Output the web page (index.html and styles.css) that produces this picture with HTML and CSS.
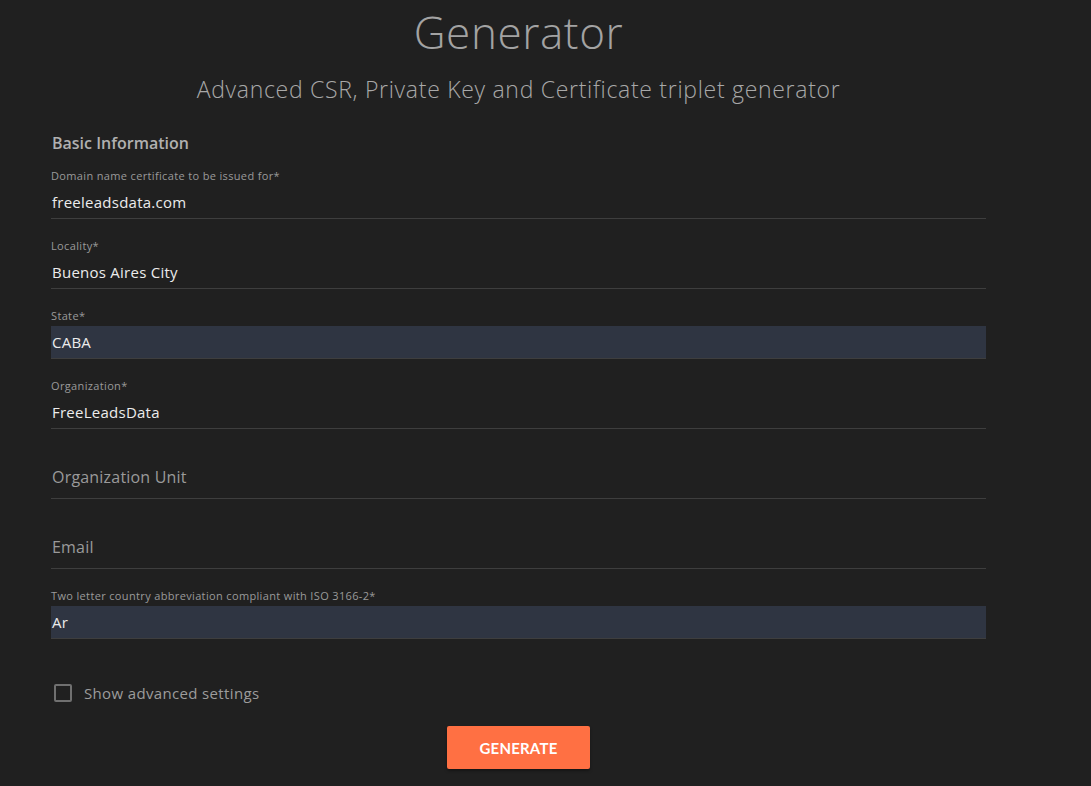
FILE: index.html
```html
<!DOCTYPE html>
<html lang="en">
<head>
<meta charset="utf-8">
<title>Generator</title>
<link rel="stylesheet" href="styles.css">
</head>
<body>
<main class="page">
  <header class="hero">
    <h1 class="title">Generator</h1>
    <p class="subtitle">Advanced CSR, Private Key and Certificate triplet generator</p>
  </header>
  <form class="form">
    <h2 class="section">Basic Information</h2>
    <div class="fields">
      <div class="field">
        <span class="label">Domain name certificate to be issued for*</span>
        <div class="input">freeleadsdata.com</div>
      </div>
      <div class="field">
        <span class="label">Locality*</span>
        <div class="input">Buenos Aires City</div>
      </div>
      <div class="field">
        <span class="label">State*</span>
        <div class="input autofill">CABA</div>
      </div>
      <div class="field">
        <span class="label">Organization*</span>
        <div class="input">FreeLeadsData</div>
      </div>
      <div class="field">
        <span class="label"></span>
        <div class="input placeholder">Organization Unit</div>
      </div>
      <div class="field">
        <span class="label"></span>
        <div class="input placeholder">Email</div>
      </div>
      <div class="field">
        <span class="label">Two letter country abbreviation compliant with ISO 3166-2*</span>
        <div class="input autofill">Ar</div>
      </div>
    </div>
    <label class="check">
      <span class="box"></span>
      <span class="check-text">Show advanced settings</span>
    </label>
    <div class="actions">
      <button type="button" class="btn">GENERATE</button>
    </div>
  </form>
</main>
</body>
</html>
```

FILE: styles.css
```css
* { box-sizing: border-box; }
html, body { margin: 0; padding: 0; }
body {
  background: #202020;
  font-family: "Open Sans", Lato, sans-serif;
  color: #e6e6e6;
  height: 786px;
  overflow: hidden;
}
.page {
  width: 935px;
  margin-left: 51px;
  padding-top: 6px;
}
.hero { text-align: center; }
.title {
  margin: 0;
  font-size: 44px;
  line-height: 53px;
  font-weight: 300;
  letter-spacing: 0.6px;
  color: #a3a3a3;
}
.subtitle {
  margin: 16px 0 0;
  font-size: 23px;
  line-height: 28px;
  font-weight: 300;
  letter-spacing: 0.7px;
  color: #a8a8a8;
}
.form { margin-top: 30px; }
.section {
  margin: 0;
  font-size: 16px;
  line-height: 20px;
  font-weight: 600;
  color: #b0b0b0;
  padding-left: 1px;
}
.fields {
  display: flex;
  flex-direction: column;
  gap: 20px;
  margin-top: 16px;
}
.field {
  display: flex;
  flex-direction: column;
  gap: 3px;
}
.label {
  display: block;
  height: 14px;
  font-size: 11px;
  line-height: 14px;
  letter-spacing: 0.35px;
  color: #9a9a9a;
}
.input {
  height: 33px;
  font-size: 15px;
  line-height: 32px;
  letter-spacing: 0.25px;
  color: #ececec;
  border-bottom: 1px solid #3e3e3e;
  padding-left: 1px;
}
.input.autofill {
  background: #2f3542;
}
.input.placeholder {
  font-size: 16px;
  line-height: 22px;
  letter-spacing: 0.2px;
  color: #9a9a9a;
}
.check {
  display: flex;
  align-items: center;
  gap: 12px;
  margin-top: 45px;
  margin-left: 3px;
  height: 18px;
}
.box {
  width: 18px;
  height: 18px;
  border: 2px solid #707070;
  border-radius: 2px;
}
.check-text {
  font-size: 15px;
  letter-spacing: 0.35px;
  color: #9c9c9c;
}
.actions {
  display: flex;
  justify-content: center;
  margin-top: 24px;
}
.btn {
  width: 143px;
  height: 43px;
  border: 0;
  border-radius: 2px;
  background: #ff7043;
  color: #fff;
  font-family: Lato, "Open Sans", sans-serif;
  font-size: 15px;
  font-weight: 700;
  letter-spacing: 0.2px;
  box-shadow: 0 2px 3px rgba(0,0,0,0.35);
}
```
